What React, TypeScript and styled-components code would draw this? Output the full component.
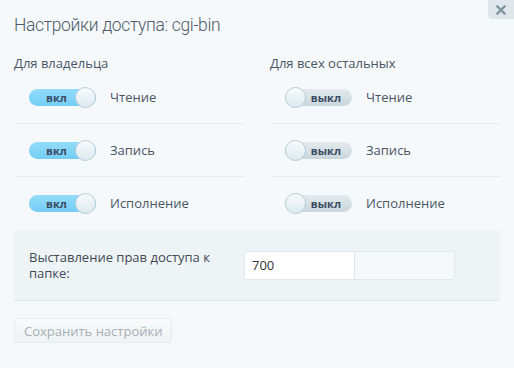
import React, { useState } from 'react';
import styled, { createGlobalStyle } from 'styled-components';

const GlobalStyle = createGlobalStyle`
  html, body {
    margin: 0;
    padding: 0;
    background: #f5f9fc;
  }
  body {
    font-family: "Open Sans", "DejaVu Sans", sans-serif;
    color: #4a5563;
  }
`;

type Perm = 'read' | 'write' | 'exec';

const permLabels: { key: Perm; label: string }[] = [
  { key: 'read', label: 'Чтение' },
  { key: 'write', label: 'Запись' },
  { key: 'exec', label: 'Исполнение' },
];

interface SwitchProps {
  on: boolean;
  onToggle: () => void;
}

const Switch: React.FC<SwitchProps> = ({ on, onToggle }) => (
  <Track $on={on} onClick={onToggle}>
    <Knob $on={on} />
    <SwitchText>{on ? 'вкл' : 'выкл'}</SwitchText>
  </Track>
);

const App: React.FC = () => {
  const [owner, setOwner] = useState({ read: true, write: true, exec: true });
  const [others, setOthers] = useState({ read: false, write: false, exec: false });

  return (
    <Dialog>
      <GlobalStyle />
      <CloseButton aria-label="Закрыть">
        <svg width="10" height="10" viewBox="0 0 10 10">
          <path d="M1.5 1.5 L8.5 8.5 M8.5 1.5 L1.5 8.5" stroke="#7f949f" strokeWidth="2.4" strokeLinecap="square" />
        </svg>
      </CloseButton>
      <Title>Настройки доступа: cgi-bin</Title>

      <Columns>
        <Column>
          <ColumnTitle>Для владельца</ColumnTitle>
          {permLabels.map(({ key, label }, i) => (
            <PermRow key={key} $last={i === permLabels.length - 1}>
              <Switch on={owner[key]} onToggle={() => setOwner({ ...owner, [key]: !owner[key] })} />
              <PermLabel>{label}</PermLabel>
            </PermRow>
          ))}
        </Column>
        <Column>
          <ColumnTitle>Для всех остальных</ColumnTitle>
          {permLabels.map(({ key, label }, i) => (
            <PermRow key={key} $last={i === permLabels.length - 1}>
              <Switch on={others[key]} onToggle={() => setOthers({ ...others, [key]: !others[key] })} />
              <PermLabel>{label}</PermLabel>
            </PermRow>
          ))}
        </Column>
      </Columns>

      <ModePanel>
        <ModeLabel>Выставление прав доступа к папке:</ModeLabel>
        <InputGroup>
          <ModeInput defaultValue="700" />
          <InputAddon />
        </InputGroup>
      </ModePanel>

      <SaveButton disabled>Сохранить настройки</SaveButton>
    </Dialog>
  );
};

// --- Styled Components ---
const Dialog = styled.div`
  position: relative;
  width: 514px;
  height: 368px;
  box-sizing: border-box;
  padding: 13px 14px 0;
`;

const CloseButton = styled.button`
  position: absolute;
  top: 0;
  right: 0;
  width: 26px;
  height: 19px;
  padding: 0;
  border: none;
  border-bottom-left-radius: 4px;
  background: #dfe7ec;
  display: flex;
  align-items: center;
  justify-content: center;
  cursor: pointer;
`;

const Title = styled.h1`
  margin: 0;
  font-family: Roboto, "Liberation Sans", sans-serif;
  font-weight: 300;
  font-size: 17.5px;
  letter-spacing: -0.35px;
  line-height: 24px;
  color: #4f5b66;
`;

const Columns = styled.div`
  display: grid;
  grid-template-columns: 230px 230px;
  column-gap: 26px;
  margin-top: 18px;
`;

const Column = styled.div`
  display: flex;
  flex-direction: column;
`;

const ColumnTitle = styled.div`
  font-size: 13px;
  line-height: 16px;
  color: #4a5563;
`;

const PermRow = styled.div<{ $last: boolean }>`
  display: flex;
  align-items: center;
  gap: 14px;
  height: 52px;
  padding-left: 15px;
  border-bottom: 1px solid ${({ $last }) => ($last ? 'transparent' : '#e6ecf0')};
`;

const PermLabel = styled.span`
  font-size: 13px;
  color: #4a5563;
`;

const Track = styled.div<{ $on: boolean }>`
  position: relative;
  width: 67px;
  height: 17px;
  border-radius: 9px;
  box-sizing: border-box;
  display: flex;
  align-items: center;
  justify-content: ${({ $on }) => ($on ? 'flex-start' : 'flex-end')};
  padding: ${({ $on }) => ($on ? '0 0 0 17px' : '0 11px 0 0')};
  background: ${({ $on }) =>
    $on
      ? 'linear-gradient(#92dcfb, #74cdf5)'
      : 'linear-gradient(#e3eaee, #c9d6dc)'};
  cursor: pointer;
`;

const Knob = styled.div<{ $on: boolean }>`
  position: absolute;
  top: -2px;
  ${({ $on }) => ($on ? 'right: 0;' : 'left: 0;')}
  width: 21px;
  height: 21px;
  box-sizing: border-box;
  border-radius: 50%;
  border: 1px solid #b7ccd6;
  background: linear-gradient(#f8fbfc, #dceaf0);
`;

const SwitchText = styled.span`
  font-family: "Open Sans", sans-serif;
  font-size: 11px;
  font-weight: 700;
  color: #3a4b62;
`;

const ModePanel = styled.div`
  display: flex;
  align-items: center;
  height: 70px;
  padding: 0 15px;
  background: #eef3f6;
  border-bottom: 1px solid #e1e8ec;
`;

const ModeLabel = styled.div`
  width: 200px;
  margin-right: 15px;
  font-size: 13px;
  line-height: 16px;
  color: #3f4a55;
`;

const InputGroup = styled.div`
  display: flex;
  width: 211px;
  height: 29px;
  box-sizing: border-box;
  border: 1px solid #dfe8ee;
  border-radius: 3px;
  overflow: hidden;
`;

const ModeInput = styled.input`
  width: 110px;
  box-sizing: border-box;
  border: none;
  border-right: 1px solid #dfe8ee;
  padding: 0 7px;
  font-family: "Open Sans", sans-serif;
  font-size: 13px;
  color: #333;
  background: #fff;
  outline: none;
`;

const InputAddon = styled.div`
  flex: 1;
  background: #f5f9fc;
`;

const SaveButton = styled.button`
  margin-top: 17px;
  height: 25px;
  padding: 0 9px;
  border: 1px solid #e6ebee;
  border-radius: 3px;
  background: linear-gradient(#f8fafb, #eff3f5);
  font-family: "Open Sans", sans-serif;
  font-size: 13px;
  color: #a7afb5;
`;

export default App;
